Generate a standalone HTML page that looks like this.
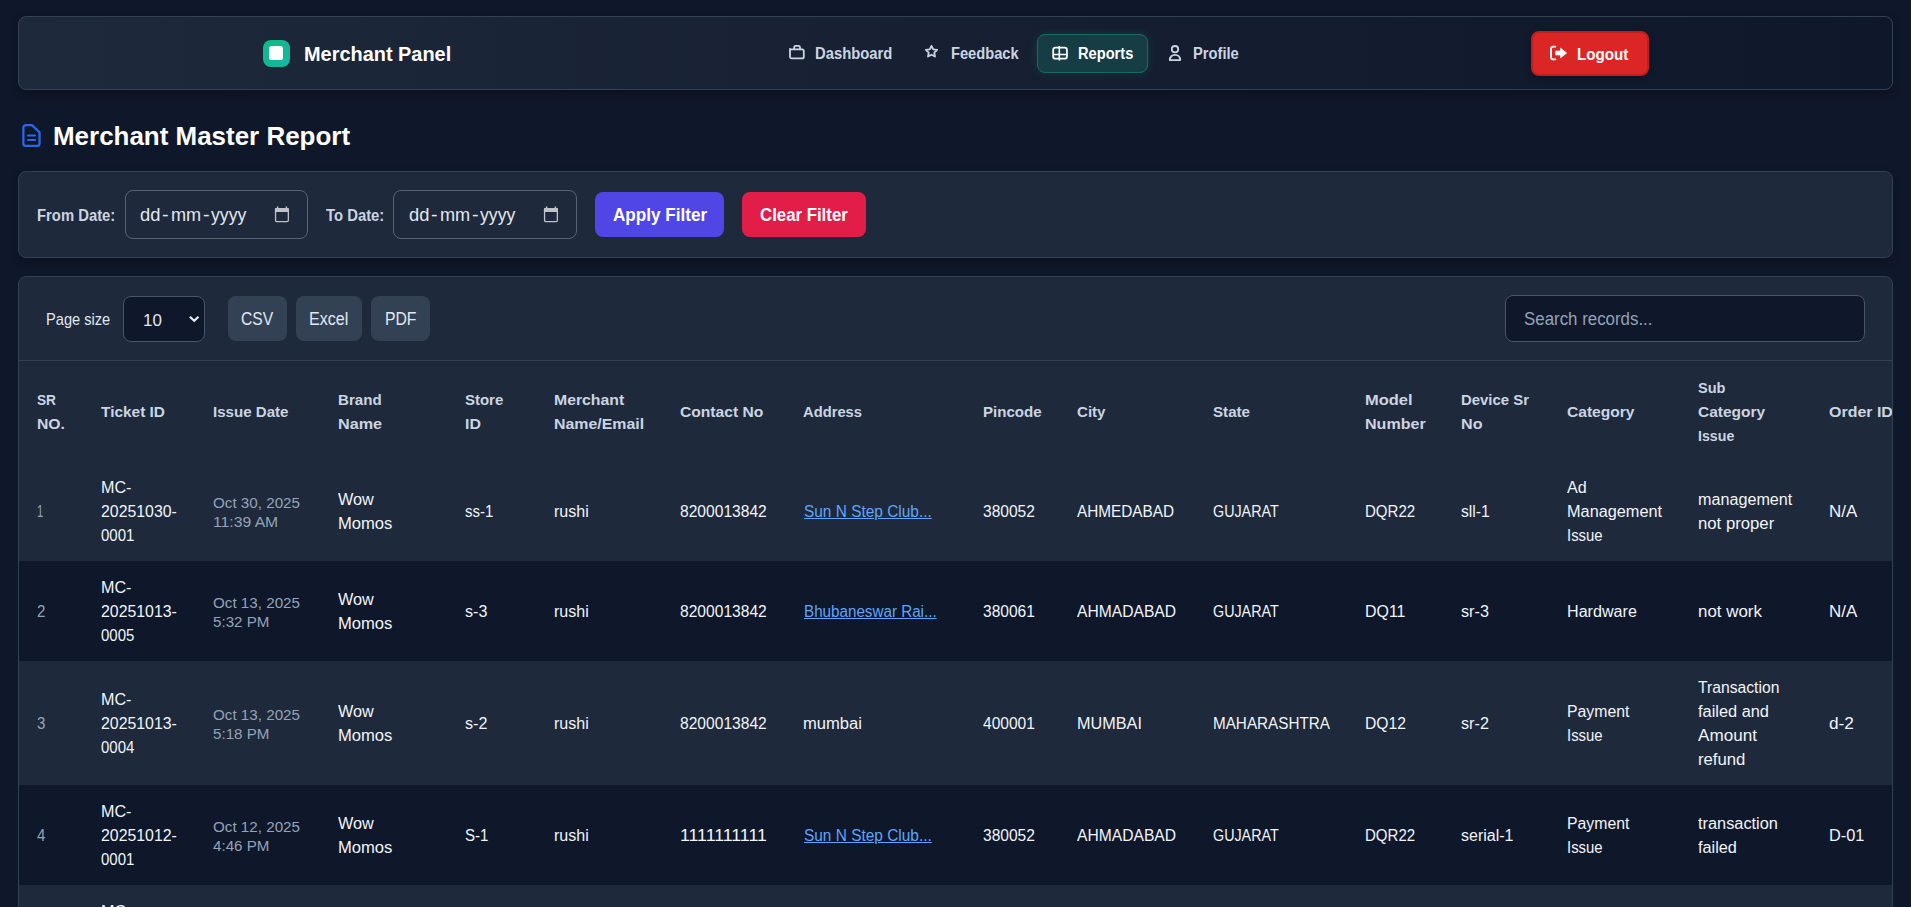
<!DOCTYPE html><html><head><meta charset="utf-8"><title>Merchant Master Report</title><style>
*{box-sizing:border-box;margin:0;padding:0}
html,body{width:1911px;height:907px;overflow:hidden}
body{background:#0f172a;font-family:"Liberation Sans",sans-serif;color:#e2e8f0;position:relative;font-size:15.5px}
span{white-space:nowrap}
.abs{position:absolute}
.nav{position:absolute;left:18px;top:16px;width:1875px;height:74px;border:1px solid #334155;border-radius:8px;background:linear-gradient(90deg,#1e293b 0%,#0f172a 100%);box-shadow:0 4px 10px rgba(0,0,0,.25)}
.brand{position:absolute;left:303.6px;top:42px;font-weight:700;font-size:19.8px;line-height:24px;color:#fff}
.logo{position:absolute;left:263px;top:40px;width:27px;height:27px;border-radius:8px;background:linear-gradient(135deg,#10b981,#14b8a6)}
.logo i{position:absolute;left:6px;top:6px;width:14.4px;height:14.4px;border-radius:2.6px;background:#fff}
.ni{position:absolute;top:44px;font-weight:700;font-size:15.6px;line-height:20px;color:#cbd5e1}
.pill{position:absolute;left:1037px;top:34px;width:111px;height:39px;border-radius:8px;background:#173d44;border:1px solid #1b6a62;box-shadow:0 0 10px rgba(16,185,129,.18)}
.logout{position:absolute;left:1531px;top:31px;width:118px;height:45px;border-radius:8px;background:#dc2626;border:2px solid #c01d1d;box-shadow:0 2px 6px rgba(0,0,0,.3)}
.title{position:absolute;left:53.4px;top:120px;font-weight:700;font-size:26px;line-height:32px;color:#fff}
.fcard{position:absolute;left:18px;top:171px;width:1875px;height:87px;border:1px solid #334155;border-radius:8px;background:#1e293b;box-shadow:0 4px 10px rgba(0,0,0,.2)}
.lbl{position:absolute;top:206px;font-weight:700;font-size:15.8px;line-height:20px;color:#cbd5e1}
.date{position:absolute;top:190px;width:183px;height:49px;border:1px solid #56647a;border-radius:8px;background:#1e293b}
.dtxt{position:absolute;top:203px;font-size:19.2px;line-height:24px;color:#e2e8f0}
.btn{position:absolute;top:192px;height:45px;border-radius:8px}
.btxt{position:absolute;top:204.4px;font-weight:700;font-size:17.5px;line-height:22px;color:#fff}
.card{position:absolute;left:18px;top:276px;width:1875px;height:700px;border:1px solid #334155;border-radius:8px;background:#1e293b;overflow:hidden}
.tbline{position:absolute;left:19px;top:360px;width:1873px;height:1px;background:#334155}
.psz{position:absolute;left:46px;top:310px;font-size:15.9px;line-height:20px;color:#e2e8f0}
.sel{position:absolute;left:123px;top:296px;width:82px;height:46px;border:1px solid #475569;border-radius:8px;background:#0f172a}
.seltxt{position:absolute;left:142.6px;top:309.3px;font-size:17.2px;line-height:22px;color:#e2e8f0}
.xb{position:absolute;top:296px;height:45px;border-radius:8px;background:#334155}
.xt{position:absolute;top:308.4px;font-size:17.6px;line-height:22px;color:#e2e8f0}
.search{position:absolute;left:1505px;top:295px;width:360px;height:47px;border:1px solid #475569;border-radius:8px;background:#0f172a}
.stxt{position:absolute;left:1524px;top:308.4px;font-size:17.6px;line-height:22px;color:#94a3b8}
table{position:absolute;left:19px;top:361px;border-collapse:collapse;table-layout:fixed;width:1900px}
th,td{padding:15px 0 13px 18px;text-align:left;vertical-align:middle;line-height:24px;white-space:nowrap;overflow:visible}
th{font-weight:700;font-size:14.6px;color:#cbd5e1}
td{font-size:16px;color:#f1f5f9}
tr.d td{background:#0f172a}
td.m{color:#94a3b8}
td.dt{color:#94a3b8;font-size:15.2px;line-height:19px}
a{color:#60a5fa;text-decoration:underline;position:relative;left:.8px}
a span{text-decoration:underline}
.edge{position:absolute;left:1892px;top:361px;width:1px;height:600px;background:#334155}
.rmask{position:absolute;left:1893px;top:277px;width:18px;height:640px;background:#0f172a}
</style></head><body><div class="nav"></div><div class="logo"><i></i></div><div class="brand"><span style="display:inline-block;transform-origin:0 50%;transform:scaleX(1.007)">Merchant Panel</span></div><div class="pill"></div><div class="logout"></div><svg class="abs" style="left:788px;top:44px" width="18" height="17" viewBox="0 0 18 17" fill="none" stroke="#cbd5e1" stroke-width="1.8"><rect x="2" y="5.4" width="13.8" height="9" rx="1.7"/><path d="M2 7V4.1" stroke-width="1.5"/><path d="M6.2 5.4V3.3a1.45 1.45 0 0 1 1.45-1.45h2.9A1.45 1.45 0 0 1 12 3.3v2.1"/></svg><svg class="abs" style="left:924px;top:44px" width="15" height="15" viewBox="0 0 15 15" fill="none" stroke="#cbd5e1" stroke-width="1.8" stroke-linejoin="round"><path d="M7.50 1.80 L9.23 5.35 L13.15 5.90 L10.31 8.65 L10.99 12.55 L7.50 10.69 L4.01 12.55 L4.69 8.65 L1.85 5.90 L5.77 5.35z"/></svg><svg class="abs" style="left:1051px;top:45px" width="18" height="17" viewBox="0 0 18 17" fill="none" stroke="#fff"><rect x="2.2" y="2.7" width="13.7" height="11" rx="2.3" stroke-width="1.8"/><path d="M8.3 0.9v14.5M2.2 9.5h14.4" stroke-width="1.6"/></svg><svg class="abs" style="left:1167px;top:45px" width="16" height="17" viewBox="0 0 16 17" fill="none" stroke="#cbd5e1" stroke-width="1.8"><circle cx="8" cy="4.2" r="3.2"/><path d="M2.8 15.1c0-3.2 2.3-5.3 5.2-5.3s5.2 2.1 5.2 5.3z" stroke-linejoin="round"/></svg><svg class="abs" style="left:1549px;top:45px" width="19" height="16" viewBox="0 0 19 16" fill="none"><path d="M6.3 1.6H4.2A2.2 2.2 0 0 0 2 3.8v8.4a2.2 2.2 0 0 0 2.2 2.2h2.1" stroke="#fff" stroke-width="1.9" stroke-linecap="round"/><path d="M6.6 6.1h5V3.2L17.6 8l-6 4.8V9.9h-5z" fill="#fff" stroke="#fff" stroke-width=".8" stroke-linejoin="round"/></svg><svg class="abs" style="left:21px;top:123px" width="21" height="25" viewBox="0 0 21 25" fill="none" stroke="#2a66ee" stroke-width="2.3" stroke-linejoin="round"><path d="M4.75 2.15H11L18.55 9.3V20.5a2.4 2.4 0 0 1-2.4 2.4H4.75a2.4 2.4 0 0 1-2.4-2.4V4.55a2.4 2.4 0 0 1 2.4-2.4z"/><path d="M7 12.5h7.1M7 17h7.1" stroke-width="2" stroke-linecap="round"/></svg><div class="ni" style="left:814.8px;"><span style="display:inline-block;transform-origin:0 50%;transform:scaleX(0.949)">Dashboard</span></div><div class="ni" style="left:951.0px;"><span style="display:inline-block;transform-origin:0 50%;transform:scaleX(0.941)">Feedback</span></div><div class="ni" style="left:1078.1px;color:#fff;"><span style="display:inline-block;transform-origin:0 50%;transform:scaleX(0.939)">Reports</span></div><div class="ni" style="left:1192.9px;"><span style="display:inline-block;transform-origin:0 50%;transform:scaleX(0.944)">Profile</span></div><div class="ni" style="left:1577.1px;color:#fff;top:45px;"><span style="display:inline-block;transform-origin:0 50%;transform:scaleX(0.973)">Logout</span></div><div class="title"><span style="display:inline-block;transform-origin:0 50%;transform:scaleX(0.998)">Merchant Master Report</span></div><div class="fcard"></div><div class="lbl" style="left:37px"><span style="display:inline-block;transform-origin:0 50%;transform:scaleX(0.939)">From Date:</span></div><div class="date" style="left:125px"></div><div class="dtxt" style="left:140.0px"><span style="display:inline-block;transform-origin:0 50%;transform:scaleX(0.956)">dd</span></div><div class="dtxt" style="left:162.2px"><span style="display:inline-block;transform-origin:0 50%;transform:scaleX(1.033)">-</span></div><div class="dtxt" style="left:171.4px"><span style="display:inline-block;transform-origin:0 50%;transform:scaleX(0.945)">mm</span></div><div class="dtxt" style="left:202.9px"><span style="display:inline-block;transform-origin:0 50%;transform:scaleX(1.033)">-</span></div><div class="dtxt" style="left:210.9px"><span style="display:inline-block;transform-origin:0 50%;transform:scaleX(0.922)">yyyy</span></div><svg class="abs" style="left:274px;top:206px" width="16" height="17" viewBox="0 0 16 17" fill="none"><rect x="1.55" y="2.75" width="12.8" height="12.8" rx="1.3" stroke="#bfc3c9" stroke-width="1.3"/><rect x="0.9" y="2.1" width="14.1" height="3.8" rx="1" fill="#bfc3c9"/><path d="M3.6 0.6v2M12.4 0.6v2" stroke="#bfc3c9" stroke-width="1.5"/></svg><div class="lbl" style="left:326px"><span style="display:inline-block;transform-origin:0 50%;transform:scaleX(0.940)">To Date:</span></div><div class="date" style="left:393px;width:184px"></div><div class="dtxt" style="left:408.6px"><span style="display:inline-block;transform-origin:0 50%;transform:scaleX(0.956)">dd</span></div><div class="dtxt" style="left:430.8px"><span style="display:inline-block;transform-origin:0 50%;transform:scaleX(1.033)">-</span></div><div class="dtxt" style="left:440.0px"><span style="display:inline-block;transform-origin:0 50%;transform:scaleX(0.945)">mm</span></div><div class="dtxt" style="left:471.5px"><span style="display:inline-block;transform-origin:0 50%;transform:scaleX(1.033)">-</span></div><div class="dtxt" style="left:479.5px"><span style="display:inline-block;transform-origin:0 50%;transform:scaleX(0.922)">yyyy</span></div><svg class="abs" style="left:543px;top:206px" width="16" height="17" viewBox="0 0 16 17" fill="none"><rect x="1.55" y="2.75" width="12.8" height="12.8" rx="1.3" stroke="#bfc3c9" stroke-width="1.3"/><rect x="0.9" y="2.1" width="14.1" height="3.8" rx="1" fill="#bfc3c9"/><path d="M3.6 0.6v2M12.4 0.6v2" stroke="#bfc3c9" stroke-width="1.5"/></svg><div class="btn" style="left:595px;width:129px;background:#4f46e5"></div><div class="btxt" style="left:612.5px"><span style="display:inline-block;transform-origin:0 50%;transform:scaleX(0.979)">Apply Filter</span></div><div class="btn" style="left:742px;width:124px;background:#e11d48"></div><div class="btxt" style="left:759.5px"><span style="display:inline-block;transform-origin:0 50%;transform:scaleX(0.960)">Clear Filter</span></div><div class="card"></div><div class="tbline"></div><div class="psz"><span style="display:inline-block;transform-origin:0 50%;transform:scaleX(0.920)">Page size</span></div><div class="sel"></div><div class="seltxt"><span style="display:inline-block;transform-origin:0 50%;transform:scaleX(0.983)">10</span></div><svg class="abs" style="left:188px;top:313px" width="13" height="11" viewBox="0 0 13 11" fill="none" stroke="#e8edf4" stroke-width="2.2" stroke-linejoin="miter"><path d="M1.9 3.7l4.3 4.0 4.3-4.0"/></svg><div class="xb" style="left:228px;width:59px"></div><div class="xt" style="left:240.6px"><span style="display:inline-block;transform-origin:0 50%;transform:scaleX(0.890)">CSV</span></div><div class="xb" style="left:296px;width:66px"></div><div class="xt" style="left:309.2px"><span style="display:inline-block;transform-origin:0 50%;transform:scaleX(0.913)">Excel</span></div><div class="xb" style="left:371px;width:59px"></div><div class="xt" style="left:384.5px"><span style="display:inline-block;transform-origin:0 50%;transform:scaleX(0.895)">PDF</span></div><div class="search"></div><div class="stxt"><span style="display:inline-block;transform-origin:0 50%;transform:scaleX(0.959)">Search records...</span></div><table><colgroup><col style="width:64px"><col style="width:112px"><col style="width:125px"><col style="width:127px"><col style="width:89px"><col style="width:126px"><col style="width:123px"><col style="width:180px"><col style="width:94px"><col style="width:136px"><col style="width:152px"><col style="width:96px"><col style="width:106px"><col style="width:131px"><col style="width:131px"><col style="width:108px"></colgroup><tr style="height:100px"><th><span style="display:inline-block;transform-origin:0 50%;transform:scaleX(0.937)">SR</span><br><span style="display:inline-block;transform-origin:0 50%;transform:scaleX(1.079)">NO.</span></th><th><span style="display:inline-block;transform-origin:0 50%;transform:scaleX(1.056)">Ticket ID</span></th><th><span style="display:inline-block;transform-origin:0 50%;transform:scaleX(1.034)">Issue Date</span></th><th><span style="display:inline-block;transform-origin:0 50%;transform:scaleX(1.034)">Brand</span><br><span style="display:inline-block;transform-origin:0 50%;transform:scaleX(1.109)">Name</span></th><th><span style="display:inline-block;transform-origin:0 50%;transform:scaleX(1.026)">Store</span><br><span style="display:inline-block;transform-origin:0 50%;transform:scaleX(1.090)">ID</span></th><th><span style="display:inline-block;transform-origin:0 50%;transform:scaleX(1.082)">Merchant</span><br><span style="display:inline-block;transform-origin:0 50%;transform:scaleX(1.089)">Name/Email</span></th><th><span style="display:inline-block;transform-origin:0 50%;transform:scaleX(1.070)">Contact No</span></th><th><span style="display:inline-block;transform-origin:0 50%;transform:scaleX(1.010)">Address</span></th><th><span style="display:inline-block;transform-origin:0 50%;transform:scaleX(1.032)">Pincode</span></th><th><span style="display:inline-block;transform-origin:0 50%;transform:scaleX(1.033)">City</span></th><th><span style="display:inline-block;transform-origin:0 50%;transform:scaleX(1.037)">State</span></th><th><span style="display:inline-block;transform-origin:0 50%;transform:scaleX(1.129)">Model</span><br><span style="display:inline-block;transform-origin:0 50%;transform:scaleX(1.101)">Number</span></th><th><span style="display:inline-block;transform-origin:0 50%;transform:scaleX(1.022)">Device Sr</span><br><span style="display:inline-block;transform-origin:0 50%;transform:scaleX(1.104)">No</span></th><th><span style="display:inline-block;transform-origin:0 50%;transform:scaleX(1.067)">Category</span></th><th><span style="display:inline-block;transform-origin:0 50%;transform:scaleX(0.997)">Sub</span><br><span style="display:inline-block;transform-origin:0 50%;transform:scaleX(1.062)">Category</span><br><span style="display:inline-block;transform-origin:0 50%;transform:scaleX(0.972)">Issue</span></th><th><span style="display:inline-block;transform-origin:0 50%;transform:scaleX(1.094)">Order ID</span></th></tr><tr style="height:100px"><td class="m"><span style="display:inline-block;transform-origin:0 50%;transform:scaleX(0.700)">1</span></td><td><span style="display:inline-block;transform-origin:0 50%;transform:scaleX(1.009)">MC-</span><br><span style="display:inline-block;transform-origin:0 50%;transform:scaleX(0.991)">20251030-</span><br><span style="display:inline-block;transform-origin:0 50%;transform:scaleX(0.936)">0001</span></td><td class="dt"><span style="display:inline-block;transform-origin:0 50%;transform:scaleX(1.000)">Oct 30, 2025</span><br><span style="display:inline-block;transform-origin:0 50%;transform:scaleX(1.034)">11:39 AM</span></td><td><span style="display:inline-block;transform-origin:0 50%;transform:scaleX(1.015)">Wow</span><br><span style="display:inline-block;transform-origin:0 50%;transform:scaleX(1.037)">Momos</span></td><td><span style="display:inline-block;transform-origin:0 50%;transform:scaleX(0.936)">ss-1</span></td><td><span style="display:inline-block;transform-origin:0 50%;transform:scaleX(1.003)">rushi</span></td><td><span style="display:inline-block;transform-origin:0 50%;transform:scaleX(0.975)">8200013842</span></td><td><a><span style="display:inline-block;transform-origin:0 50%;transform:scaleX(0.964)">Sun N Step Club...</span></a></td><td><span style="display:inline-block;transform-origin:0 50%;transform:scaleX(0.972)">380052</span></td><td><span style="display:inline-block;transform-origin:0 50%;transform:scaleX(0.958)">AHMEDABAD</span></td><td><span style="display:inline-block;transform-origin:0 50%;transform:scaleX(0.894)">GUJARAT</span></td><td><span style="display:inline-block;transform-origin:0 50%;transform:scaleX(0.939)">DQR22</span></td><td><span style="display:inline-block;transform-origin:0 50%;transform:scaleX(0.981)">sll-1</span></td><td><span style="display:inline-block;transform-origin:0 50%;transform:scaleX(1.006)">Ad</span><br><span style="display:inline-block;transform-origin:0 50%;transform:scaleX(1.018)">Management</span><br><span style="display:inline-block;transform-origin:0 50%;transform:scaleX(0.931)">Issue</span></td><td><span style="display:inline-block;transform-origin:0 50%;transform:scaleX(1.010)">management</span><br><span style="display:inline-block;transform-origin:0 50%;transform:scaleX(1.045)">not proper</span></td><td><span style="display:inline-block;transform-origin:0 50%;transform:scaleX(1.061)">N/A</span></td></tr><tr class="d" style="height:100px"><td class="m"><span style="display:inline-block;transform-origin:0 50%;transform:scaleX(0.943)">2</span></td><td><span style="display:inline-block;transform-origin:0 50%;transform:scaleX(1.009)">MC-</span><br><span style="display:inline-block;transform-origin:0 50%;transform:scaleX(0.991)">20251013-</span><br><span style="display:inline-block;transform-origin:0 50%;transform:scaleX(0.936)">0005</span></td><td class="dt"><span style="display:inline-block;transform-origin:0 50%;transform:scaleX(1.000)">Oct 13, 2025</span><br><span style="display:inline-block;transform-origin:0 50%;transform:scaleX(0.997)">5:32 PM</span></td><td><span style="display:inline-block;transform-origin:0 50%;transform:scaleX(1.015)">Wow</span><br><span style="display:inline-block;transform-origin:0 50%;transform:scaleX(1.037)">Momos</span></td><td><span style="display:inline-block;transform-origin:0 50%;transform:scaleX(1.007)">s-3</span></td><td><span style="display:inline-block;transform-origin:0 50%;transform:scaleX(1.003)">rushi</span></td><td><span style="display:inline-block;transform-origin:0 50%;transform:scaleX(0.975)">8200013842</span></td><td><a><span style="display:inline-block;transform-origin:0 50%;transform:scaleX(0.950)">Bhubaneswar Rai...</span></a></td><td><span style="display:inline-block;transform-origin:0 50%;transform:scaleX(0.972)">380061</span></td><td><span style="display:inline-block;transform-origin:0 50%;transform:scaleX(0.977)">AHMADABAD</span></td><td><span style="display:inline-block;transform-origin:0 50%;transform:scaleX(0.894)">GUJARAT</span></td><td><span style="display:inline-block;transform-origin:0 50%;transform:scaleX(0.995)">DQ11</span></td><td><span style="display:inline-block;transform-origin:0 50%;transform:scaleX(1.012)">sr-3</span></td><td><span style="display:inline-block;transform-origin:0 50%;transform:scaleX(1.008)">Hardware</span></td><td><span style="display:inline-block;transform-origin:0 50%;transform:scaleX(1.057)">not work</span></td><td><span style="display:inline-block;transform-origin:0 50%;transform:scaleX(1.061)">N/A</span></td></tr><tr style="height:124px"><td class="m"><span style="display:inline-block;transform-origin:0 50%;transform:scaleX(0.943)">3</span></td><td><span style="display:inline-block;transform-origin:0 50%;transform:scaleX(1.009)">MC-</span><br><span style="display:inline-block;transform-origin:0 50%;transform:scaleX(0.991)">20251013-</span><br><span style="display:inline-block;transform-origin:0 50%;transform:scaleX(0.936)">0004</span></td><td class="dt"><span style="display:inline-block;transform-origin:0 50%;transform:scaleX(1.000)">Oct 13, 2025</span><br><span style="display:inline-block;transform-origin:0 50%;transform:scaleX(0.997)">5:18 PM</span></td><td><span style="display:inline-block;transform-origin:0 50%;transform:scaleX(1.015)">Wow</span><br><span style="display:inline-block;transform-origin:0 50%;transform:scaleX(1.037)">Momos</span></td><td><span style="display:inline-block;transform-origin:0 50%;transform:scaleX(1.007)">s-2</span></td><td><span style="display:inline-block;transform-origin:0 50%;transform:scaleX(1.003)">rushi</span></td><td><span style="display:inline-block;transform-origin:0 50%;transform:scaleX(0.975)">8200013842</span></td><td><span style="display:inline-block;transform-origin:0 50%;transform:scaleX(1.035)">mumbai</span></td><td><span style="display:inline-block;transform-origin:0 50%;transform:scaleX(0.972)">400001</span></td><td><span style="display:inline-block;transform-origin:0 50%;transform:scaleX(1.014)">MUMBAI</span></td><td><span style="display:inline-block;transform-origin:0 50%;transform:scaleX(0.953)">MAHARASHTRA</span></td><td><span style="display:inline-block;transform-origin:0 50%;transform:scaleX(0.979)">DQ12</span></td><td><span style="display:inline-block;transform-origin:0 50%;transform:scaleX(1.012)">sr-2</span></td><td><span style="display:inline-block;transform-origin:0 50%;transform:scaleX(0.988)">Payment</span><br><span style="display:inline-block;transform-origin:0 50%;transform:scaleX(0.931)">Issue</span></td><td><span style="display:inline-block;transform-origin:0 50%;transform:scaleX(0.981)">Transaction</span><br><span style="display:inline-block;transform-origin:0 50%;transform:scaleX(1.022)">failed and</span><br><span style="display:inline-block;transform-origin:0 50%;transform:scaleX(1.068)">Amount</span><br><span style="display:inline-block;transform-origin:0 50%;transform:scaleX(1.045)">refund</span></td><td><span style="display:inline-block;transform-origin:0 50%;transform:scaleX(1.077)">d-2</span></td></tr><tr class="d" style="height:100px"><td class="m"><span style="display:inline-block;transform-origin:0 50%;transform:scaleX(0.943)">4</span></td><td><span style="display:inline-block;transform-origin:0 50%;transform:scaleX(1.009)">MC-</span><br><span style="display:inline-block;transform-origin:0 50%;transform:scaleX(0.991)">20251012-</span><br><span style="display:inline-block;transform-origin:0 50%;transform:scaleX(0.936)">0001</span></td><td class="dt"><span style="display:inline-block;transform-origin:0 50%;transform:scaleX(1.000)">Oct 12, 2025</span><br><span style="display:inline-block;transform-origin:0 50%;transform:scaleX(0.997)">4:46 PM</span></td><td><span style="display:inline-block;transform-origin:0 50%;transform:scaleX(1.015)">Wow</span><br><span style="display:inline-block;transform-origin:0 50%;transform:scaleX(1.037)">Momos</span></td><td><span style="display:inline-block;transform-origin:0 50%;transform:scaleX(0.940)">S-1</span></td><td><span style="display:inline-block;transform-origin:0 50%;transform:scaleX(1.003)">rushi</span></td><td><span style="display:inline-block;transform-origin:0 50%;transform:scaleX(1.109)">1111111111</span></td><td><a><span style="display:inline-block;transform-origin:0 50%;transform:scaleX(0.964)">Sun N Step Club...</span></a></td><td><span style="display:inline-block;transform-origin:0 50%;transform:scaleX(0.972)">380052</span></td><td><span style="display:inline-block;transform-origin:0 50%;transform:scaleX(0.977)">AHMADABAD</span></td><td><span style="display:inline-block;transform-origin:0 50%;transform:scaleX(0.894)">GUJARAT</span></td><td><span style="display:inline-block;transform-origin:0 50%;transform:scaleX(0.939)">DQR22</span></td><td><span style="display:inline-block;transform-origin:0 50%;transform:scaleX(0.999)">serial-1</span></td><td><span style="display:inline-block;transform-origin:0 50%;transform:scaleX(0.988)">Payment</span><br><span style="display:inline-block;transform-origin:0 50%;transform:scaleX(0.931)">Issue</span></td><td><span style="display:inline-block;transform-origin:0 50%;transform:scaleX(1.021)">transaction</span><br><span style="display:inline-block;transform-origin:0 50%;transform:scaleX(1.017)">failed</span></td><td><span style="display:inline-block;transform-origin:0 50%;transform:scaleX(1.021)">D-01</span></td></tr><tr style="height:100px"><td class="m"><span style="display:inline-block;transform-origin:0 50%;transform:scaleX(0.943)">5</span></td><td><span style="display:inline-block;transform-origin:0 50%;transform:scaleX(1.009)">MC-</span><br><span style="display:inline-block;transform-origin:0 50%;transform:scaleX(1.006)">20251011-</span><br><span style="display:inline-block;transform-origin:0 50%;transform:scaleX(0.936)">0001</span></td><td></td><td></td><td></td><td></td><td></td><td></td><td></td><td></td><td></td><td></td><td></td><td></td><td></td><td></td></tr></table><div class="rmask"></div><div class="edge"></div></body></html>
